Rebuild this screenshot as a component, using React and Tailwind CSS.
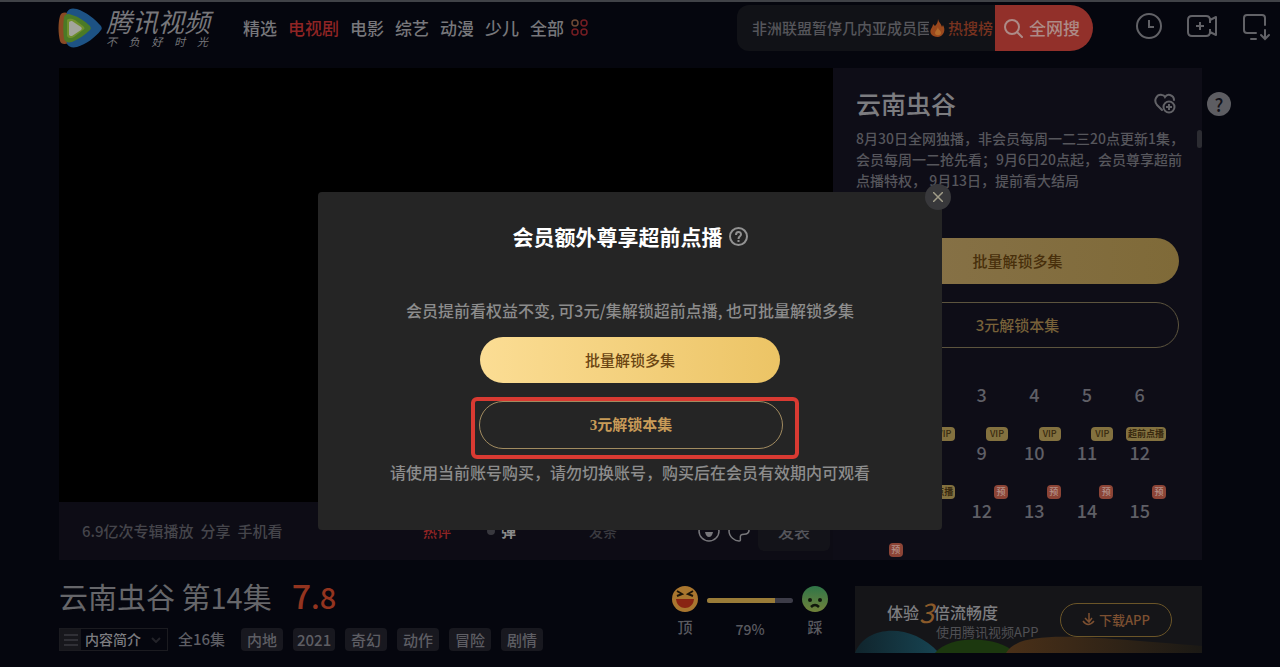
import React, { useState } from 'react';

const navItems = ['精选', '电视剧', '电影', '综艺', '动漫', '少儿', '全部'];
const tags = ['内地', '2021', '奇幻', '动作', '冒险', '剧情'];

const episodes = [
  { no: 1 }, { no: 2 }, { no: 3 }, { no: 4 }, { no: 5 }, { no: 6 },
  { no: 7, badge: 'VIP' }, { no: 8, badge: 'VIP' }, { no: 9, badge: 'VIP' },
  { no: 10, badge: 'VIP' }, { no: 11, badge: 'VIP' }, { no: 12, badge: '超前点播' },
  { no: 10, badge: '超前点播' }, { no: 11, badge: '超前点播' }, { no: 12, badge: '预' },
  { no: 13, badge: '预' }, { no: 14, badge: '预' }, { no: 15, badge: '预' },
  { no: '', badge: '预' },
];

function Logo() {
  return (
    <a href="#home" aria-label="腾讯视频" className="flex items-center gap-1 font-normal text-[#77777b]">
      <svg width="44" height="40" viewBox="0 0 44 40">
        <path d="M2 8C3 4 7 4 10 5L26 15C30 18 30 22 26 25L11 35C6 37 3 36 2 33C0 25 0 15 2 8Z" fill="#8a4a24" />
        <path d="M9 4C11 0 15 0 19 1C28 4 37 11 43 18C44 20 44 21 43 22C37 30 28 36 19 39C14 40 11 39 9 36C7 28 7 12 9 4Z" fill="#1d5284" />
        <path d="M6 9C7 6 10 5 14 7C21 9 27 13 32 18C33 20 33 21 32 22C27 27 21 31 14 34C10 35 7 34 6 31C5 24 5 16 6 9Z" fill="#4b7a26" />
        <path d="M9 12C11 10 14 11 17 12L25 18C27 20 27 21 25 22L16 29C12 31 10 30 9 28Z" fill="#6f8f2c" />
        <path d="M11 14C12 13 13 13 14 13L23 19C24 20 24 21 23 22L14 28C13 28 12 28 11 27Z" fill="#a3a59c" />
      </svg>
      <span className="flex w-[106px] flex-col italic">
        <span className="text-[26px] leading-[26px] whitespace-nowrap">腾讯视频</span>
        <span className="flex justify-between pr-1 text-[11px] leading-[14px]">
          {'不负好时光'.split('').map((c) => (
            <span key={c}>{c}</span>
          ))}
        </span>
      </span>
    </a>
  );
}

function Header() {
  const [keyword, setKeyword] = useState('非洲联盟暂停几内亚成员国家');

  return (
    <header className="flex h-[54px] items-center border-t-2 border-[#404247] pr-[9px] pl-[58px]">
      <Logo />
      <nav className="ml-[31px] flex items-center gap-[11px] text-[17px] whitespace-nowrap text-[#77777b]">
        {navItems.map((item) => (
          <a key={item} href="#nav" className={item === '电视剧' ? 'text-[#8f2424]' : ''}>
            {item}
          </a>
        ))}
        <svg width="18" height="18" viewBox="0 0 18 18" fill="none" strokeWidth="1.5" className="-ml-1">
          <circle cx="4" cy="4" r="3" stroke="#6e4a35" />
          <circle cx="13" cy="4" r="3" stroke="#741d22" />
          <circle cx="4" cy="13" r="3" stroke="#741d22" />
          <circle cx="13" cy="13" r="3" stroke="#741d22" />
        </svg>
      </nav>

      <form className="ml-auto flex h-[46px]" onSubmit={(e) => e.preventDefault()}>
        <div className="flex items-center rounded-l-xl bg-[#111217] pl-[15px] text-[15px]">
          <input
            type="text"
            aria-label="搜索"
            value={keyword}
            onChange={(e) => setKeyword(e.target.value)}
            className="w-[177px] bg-transparent text-[#56565b] outline-none"
          />
          <a href="#hot" className="flex w-[66px] items-center gap-0.5 whitespace-nowrap text-[#78321f]">
            <svg width="17" height="18" viewBox="0 0 17 18">
              <path d="M9 0C10 4 12 4 13 8L14 6C17 11 15 17 9 18C3 18 0 14 2 10C3 8 4 7 4 5L6 7C8 5 9 3 9 0Z" fill="#9a481d" />
              <path d="M9 8C9 11 12 11 12 14C12 17 6 17 6 14C6 12 8 11 9 8Z" fill="#b26a2b" />
            </svg>
            热搜榜
          </a>
        </div>
        <button type="submit" className="flex w-[98px] items-center gap-1.5 rounded-r-full bg-[#92302a] pl-[9px] text-[17px] whitespace-nowrap text-[#ad8b87]">
          <svg width="19" height="20" viewBox="0 0 19 20" fill="none" stroke="currentColor" strokeWidth="2">
            <circle cx="8" cy="9" r="7" />
            <path d="M13 14L18 19" strokeLinecap="round" />
          </svg>
          全网搜
        </button>
      </form>

      <div className="ml-[43px] flex items-center gap-6 text-[#626267]">
        <button type="button" aria-label="历史">
          <svg width="27" height="30" viewBox="0 0 27 30" fill="none" stroke="currentColor" strokeWidth="2">
            <circle cx="13" cy="13" r="12" />
            <path d="M13 7V14H18" />
          </svg>
        </button>
        <button type="button" aria-label="创作">
          <svg width="31" height="30" viewBox="0 0 31 30" fill="none" stroke="currentColor" strokeWidth="2" strokeLinejoin="round">
            <path d="M5 3H19Q23 3 23 7L29 4V22L23 19Q23 23 19 23H5Q1 23 1 19V7Q1 3 5 3Z" />
            <path d="M23 7V10M23 16V19M13 9V17M9 13H17" />
          </svg>
        </button>
        <button type="button" aria-label="客户端">
          <svg width="29" height="30" viewBox="0 0 29 30" fill="none" stroke="currentColor" strokeWidth="2" strokeLinecap="round">
            <path d="M14 20H5Q2 20 2 17V5Q2 2 5 2H20Q23 2 23 5V12M9 26H14M23 17V25M19 22L23 26L27 22" />
          </svg>
        </button>
      </div>
    </header>
  );
}

function Player() {
  return (
    <section className="flex min-w-0 flex-1 flex-col">
      <div className="flex-1 bg-black" />
      <div className="flex h-[58px] items-center bg-[#0d0c15] pr-[3px] pl-[23px] text-[15px] whitespace-nowrap text-[#45454b]">
        <div className="flex w-[341px] gap-[7px]">
          <span>6.9亿次专辑播放</span>
          <button type="button">分享</button>
          <button type="button">手机看</button>
        </div>
        <button type="button" className="w-16 text-left text-[14px] text-[#8f2424]">热评</button>
        <button type="button" className="flex w-[102px] items-center gap-1.5 font-bold text-[#8a8a8a]">
          <span className="h-2 w-2 rounded-full bg-[#38383e]" />
          弹
        </button>
        <input type="text" aria-label="弹幕" placeholder="发条" className="w-20 min-w-0 bg-transparent text-[14px] outline-none placeholder:text-[#3a3a40]" />
        <div className="ml-auto flex items-center gap-2 text-[#77777b]">
          <svg width="22" height="22" viewBox="0 0 22 22" fill="none" stroke="currentColor" strokeWidth="1.5">
            <circle cx="11" cy="11" r="10" />
            <path d="M7 12H15Q14 17 11 17Q8 17 7 12Z" fill="currentColor" stroke="none" />
          </svg>
          <svg width="22" height="22" viewBox="0 0 22 22" fill="none" stroke="currentColor" strokeWidth="1.5">
            <path d="M21 11C21 5 17 1 11 1C5 1 1 5 1 11C1 17 7 21 11 21C14 21 11 17 13 15C15 13 20 16 21 11Z" />
          </svg>
          <button type="button" className="h-10 w-[72px] rounded-md bg-[#131319] text-[16px] text-[#55555b]">发表</button>
        </div>
      </div>
    </section>
  );
}

function Badge({ text }) {
  if (!text) return null;
  if (text === '预') {
    return <span className="h-3.5 w-3.5 rounded-sm bg-[#8c4436] text-center text-[9px] leading-[14px] text-[#b39189]">{text}</span>;
  }
  return (
    <span className={`h-3.5 rounded-sm bg-[#83713f] text-center leading-[14px] whitespace-nowrap text-[#38290f] ${text === 'VIP' ? 'w-[22px] text-[9px]' : 'w-10 text-[9px] font-bold'}`}>
      {text}
    </span>
  );
}

function Sidebar() {
  return (
    <aside className="relative w-[369px] shrink-0 bg-[#0e0d17]">
      <div className="h-[492px] overflow-hidden px-[23px]">
        <div className="flex h-[60px] items-end justify-between pr-[3px] pb-[7px]">
          <h2 className="text-[25px] leading-9 text-[#7c7c80]">云南虫谷</h2>
          <button type="button" aria-label="收藏" className="pb-1.5 text-[#626267]">
            <svg width="22" height="22" viewBox="0 0 22 22" fill="none" stroke="currentColor" strokeWidth="2">
              <path d="M8 17L3 12C-1 7 3 1 8 2C10 2 11 4 11 4C11 4 13 1 16 2C19 3 20 5 20 7" strokeLinecap="round" />
              <circle cx="15" cy="14" r="5.5" />
              <path d="M12 14H18M15 11V17" />
            </svg>
          </button>
        </div>
        <p className="text-[14px] leading-[21px] whitespace-nowrap text-[#56565c]">
          8月30日全网独播，非会员每周一二三20点更新1集，<br />
          会员每周一二抢先看；9月6日20点起，会员尊享超前<br />
          点播特权， 9月13日，提前看大结局
        </p>
        <button type="button" className="mt-[47px] block h-[46px] w-full rounded-full bg-linear-to-r from-[#88734a] to-[#7f6a38] text-[15px] text-[#482f0b]">
          批量解锁多集
        </button>
        <button type="button" className="mt-[18px] block h-[46px] w-full rounded-full border border-[#5c543e] text-[15px] text-[#776139]">
          3元解锁本集
        </button>
        <div className="mt-[21px] -ml-1.5 grid w-[316px] grid-cols-6">
          {episodes.map((ep, i) => (
            <button key={i} type="button" className="flex h-[58px] flex-col items-center text-[18px] leading-[22px] text-[#5f5f66]">
              <span className="flex h-3.5 w-full justify-end">
                <Badge text={ep.badge} />
              </span>
              {ep.no}
            </button>
          ))}
        </div>
      </div>
      <span className="absolute top-[62px] right-0 h-[18px] w-[5px] rounded-full bg-[#2c2c32]" />
      <button type="button" aria-label="帮助" className="absolute top-6 -right-[29px] h-6 w-6 rounded-full bg-[#5d5d62] text-[18px] leading-6 text-[#111118]">
        ?
      </button>
    </aside>
  );
}

function Rating() {
  return (
    <div className="flex w-[156px] justify-between pt-0.5 text-[15px] leading-6 text-[#5a5a60]">
      <button type="button" className="flex flex-col items-center gap-[3px]">
        <svg width="26" height="26" viewBox="0 0 26 26">
          <circle cx="13" cy="13" r="13" fill="#a9762f" />
          <path d="M5 5L10 8L5 10M21 5L16 8L21 10" fill="none" stroke="#1c1408" strokeWidth="2" />
          <path d="M4 13H22C21 25 5 25 4 13Z" fill="#892413" />
        </svg>
        顶
      </button>
      <div className="flex flex-col items-center pt-3">
        <div className="h-[5px] w-[86px] overflow-hidden rounded-full bg-[#3d3c48]">
          <div className="h-full w-[79%] bg-[#9a7c38]" />
        </div>
        <span className="mt-3.5 text-[14px]">79%</span>
      </div>
      <button type="button" className="flex flex-col items-center gap-[3px]">
        <svg width="26" height="26" viewBox="0 0 26 26">
          <defs>
            <linearGradient id="sad" x2="0" y2="1">
              <stop stopColor="#2f7548" />
              <stop offset="1" stopColor="#71823a" />
            </linearGradient>
          </defs>
          <circle cx="13" cy="13" r="13" fill="url(#sad)" />
          <circle cx="8" cy="14" r="2" fill="#11180c" />
          <circle cx="18" cy="14" r="2" fill="#11180c" />
          <path d="M9 21Q13 17 17 21" fill="none" stroke="#11180c" strokeWidth="2.5" />
        </svg>
        踩
      </button>
    </div>
  );
}

function Banner() {
  return (
    <div className="relative flex h-[67px] w-[347px] shrink-0 items-center justify-between overflow-hidden bg-[#151518] pr-[30px] pl-8 whitespace-nowrap">
      <svg className="absolute inset-0" width="347" height="67" viewBox="0 0 347 67">
        <defs>
          <linearGradient id="blue">
            <stop stopColor="#10242c" />
            <stop offset="1" stopColor="#174452" />
          </linearGradient>
          <linearGradient id="orange">
            <stop stopColor="#4a3018" />
            <stop offset="1" stopColor="#1b1915" />
          </linearGradient>
        </defs>
        <path d="M0 67C10 40 55 35 84 67Z" fill="url(#blue)" />
        <path d="M80 67C95 48 145 50 160 67Z" fill="#1c380f" />
        <path d="M151 67C165 43 225 50 347 60V67Z" fill="url(#orange)" />
      </svg>
      <div className="relative text-[#7d7d80]">
        <div className="flex h-6 items-center text-[16px]">
          体验
          <span className="text-[27px] leading-6 font-normal text-[#8a5a2a] italic">3</span>
          倍流畅度
        </div>
        <div className="pl-[49px] text-[13px] leading-4 font-normal text-[#505054]">使用腾讯视频APP</div>
      </div>
      <button type="button" className="relative flex h-[34px] w-28 items-center justify-center gap-1 rounded-full border border-[#6b5528] text-[13px] text-[#7d5031]">
        <svg width="13" height="13" viewBox="0 0 13 13" fill="none" stroke="currentColor" strokeWidth="1.5">
          <path d="M7 0V8M3 5L7 9L10 5M1 8Q6 15 12 8" />
        </svg>
        下载APP
      </button>
    </div>
  );
}

function VideoInfo() {
  return (
    <section className="flex pt-6 whitespace-nowrap">
      <div className="flex-1">
        <h1 className="flex items-center gap-5 text-[29px] leading-[22px] font-normal text-[#66666a]">
          云南虫谷 第14集
          <span className="text-[34px] font-medium text-[#93341f]">
            7<span className="text-[29px]">.8</span>
          </span>
        </h1>
        <div className="mt-[21px] flex h-[23px] items-center gap-2.5 text-[15px] text-[#5e5e64]">
          <button type="button" className="flex h-full w-[109px] items-center border border-[#1b1b20] text-[14px] text-[#7c7c80]">
            <span className="flex h-full w-[21px] items-center justify-center bg-[#17171c]">
              <svg width="14" height="12" viewBox="0 0 14 12" stroke="#303036" strokeWidth="2">
                <path d="M0 1H14M0 6H14M0 11H14" />
              </svg>
            </span>
            <span className="pl-1">内容简介</span>
            <svg className="ml-2.5" width="10" height="6" viewBox="0 0 10 6" fill="none" stroke="#232329" strokeWidth="2">
              <path d="M1 1L5 5L9 1" />
            </svg>
          </button>
          <span className="mr-1.5">全16集</span>
          {tags.map((tag) => (
            <a key={tag} href="#tag" className="w-[42px] rounded-sm bg-[#18181f] text-center leading-[23px]">
              {tag}
            </a>
          ))}
        </div>
      </div>
      <Rating />
      <div className="mt-0.5 ml-[27px]">
        <Banner />
      </div>
    </section>
  );
}

function UnlockDialog({ onClose }) {
  return (
    <div className="fixed inset-0 flex items-start justify-center pt-48 pr-5">
      <div role="dialog" aria-label="会员额外尊享超前点播" className="relative flex w-[624px] flex-col items-center rounded-sm bg-[#252525] pt-[30px] pb-[46px] text-[16px] leading-6 whitespace-nowrap text-[#8c8c8c]">
        <h2 className="flex items-center gap-1.5 text-[21px] leading-7 font-bold text-white">
          会员额外尊享超前点播
          <svg width="19" height="19" viewBox="0 0 19 19" fill="none" stroke="#929292" strokeWidth="2">
            <circle cx="9.5" cy="9.5" r="8.5" />
            <path d="M7 8C7 4 12 4 12 7.5C12 9.5 9.5 9 9.5 12M9.5 13V15" />
          </svg>
        </h2>
        <p className="mt-12">会员提前看权益不变, 可3元/集解锁超前点播, 也可批量解锁多集</p>
        <button type="button" className="mt-[15px] h-[46px] w-[300px] rounded-full bg-linear-to-r from-[#fbdd94] to-[#ecc465] text-[15px] text-[#6b4512]">
          批量解锁多集
        </button>
        <div className="mt-3.5 ml-2.5 w-[328px] rounded-md border-4 border-[#d93a32] pr-3 pb-1.5 pl-1">
          <button type="button" className="block h-12 w-full rounded-full border border-[#a18b60] font-['Liberation_Serif','Noto_Sans_CJK_SC',serif] text-[15px] font-bold text-[#c89b58]">
            3元解锁本集
          </button>
        </div>
        <p className="mt-px">请使用当前账号购买，请勿切换账号，购买后在会员有效期内可观看</p>
        <button
          type="button"
          aria-label="关闭"
          onClick={onClose}
          className="absolute -top-2 -right-[9px] flex h-[26px] w-[26px] items-center justify-center rounded-full bg-[#38383b]"
        >
          <svg width="10" height="10" viewBox="0 0 10 10" stroke="#a09c88" strokeWidth="1.5">
            <path d="M0 0L10 10M10 0L0 10" />
          </svg>
        </button>
      </div>
    </div>
  );
}

function App() {
  const [open, setOpen] = useState(true);

  return (
    <div className="min-h-screen bg-[#05060e] font-['Noto_Sans_CJK_SC',sans-serif] font-medium">
      <Header />
      <main className="mt-3.5 pr-[78px] pl-[59px]">
        <div className="flex">
          <Player />
          <Sidebar />
        </div>
        <VideoInfo />
      </main>
      {open && <UnlockDialog onClose={() => setOpen(false)} />}
    </div>
  );
}

export default App;
